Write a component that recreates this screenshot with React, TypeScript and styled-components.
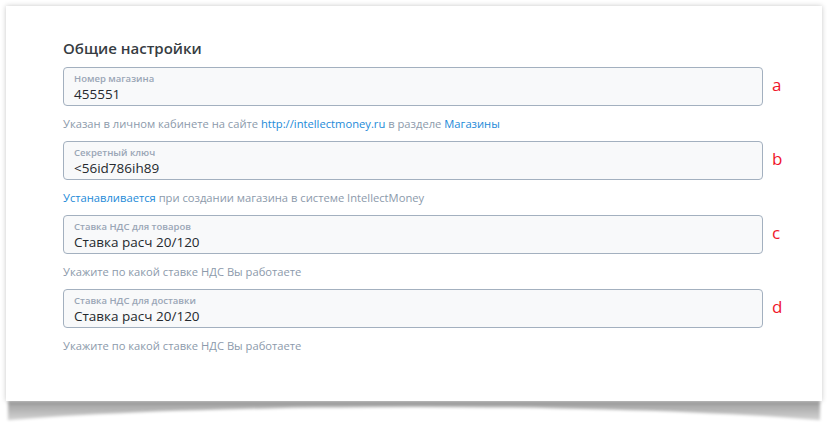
import styled, { createGlobalStyle } from 'styled-components';

const GlobalStyle = createGlobalStyle`
  html, body {
    margin: 0;
    padding: 0;
    background: #ffffff;
    overflow: hidden;
  }
  body {
    font-family: 'Open Sans', 'Noto Sans', sans-serif;
  }
`;

const Page = styled.div`
  width: 836px;
  height: 430px;
  padding: 6px 14px 0 6px;
  box-sizing: border-box;
  overflow: hidden;
`;

const Frame = styled.div`
  position: relative;
  width: 816px;

  &::before {
    content: '';
    position: absolute;
    left: 2px;
    right: 2px;
    top: 100%;
    height: 22px;
    background: linear-gradient(to bottom, #9c9c9c, #c8c8c8 70%, #e0e0e0);
    filter: blur(1.5px);
  }

  &::after {
    content: '';
    position: absolute;
    left: -90px;
    right: -90px;
    top: calc(100% + 6px);
    height: 64px;
    border-radius: 50%;
    background: #ffffff;
    filter: blur(1.5px);
  }
`;

const Card = styled.div`
  position: relative;
  z-index: 1;
  height: 395px;
  box-sizing: border-box;
  padding: 32px 0 0 57px;
  background: #ffffff;
  box-shadow: 0 0 5px rgba(0, 0, 0, 0.22);
`;

const Title = styled.h2`
  margin: 0 0 9px;
  font-size: 15px;
  line-height: 20px;
  font-weight: 600;
  color: #363c42;
`;

const Group = styled.div`
  display: flex;
  flex-direction: column;
`;

const Row = styled.div`
  display: flex;
  align-items: center;
`;

const Field = styled.div`
  width: 700px;
  height: 39px;
  box-sizing: border-box;
  padding: 5px 10px 0;
  border: 1px solid #a3b0bf;
  border-radius: 4px;
  background: #f8f9fa;
`;

const FieldLabel = styled.div`
  font-size: 9.5px;
  line-height: 12px;
  font-weight: 600;
  color: #9aa6b6;
`;

const FieldValue = styled.div`
  font-size: 13.5px;
  line-height: 18px;
  color: #25292e;
`;

const Mark = styled.span`
  margin-left: 9px;
  margin-top: -4px;
  font-family: 'Open Sans', sans-serif;
  font-size: 17px;
  color: #f0142a;
`;

const Hint = styled.div`
  padding: 10px 0 9px;
  font-size: 11.2px;
  line-height: 16px;
  color: #8c9aab;
`;

const Link = styled.span`
  color: #1c8ad8;
`;

interface Setting {
  label: string;
  value: string;
  mark: string;
  hint: React.ReactNode;
}

const settings: Setting[] = [
  {
    label: 'Номер магазина',
    value: '455551',
    mark: 'a',
    hint: (
      <>
        Указан в личном кабинете на сайте <Link>http://intellectmoney.ru</Link> в разделе{' '}
        <Link>Магазины</Link>
      </>
    ),
  },
  {
    label: 'Секретный ключ',
    value: '<56id786ih89',
    mark: 'b',
    hint: (
      <>
        <Link>Устанавливается</Link> при создании магазина в системе IntellectMoney
      </>
    ),
  },
  {
    label: 'Ставка НДС для товаров',
    value: 'Ставка расч 20/120',
    mark: 'c',
    hint: 'Укажите по какой ставке НДС Вы работаете',
  },
  {
    label: 'Ставка НДС для доставки',
    value: 'Ставка расч 20/120',
    mark: 'd',
    hint: 'Укажите по какой ставке НДС Вы работаете',
  },
];

export default function App() {
  return (
    <>
      <GlobalStyle />
      <Page>
        <Frame>
          <Card>
            <Title>Общие настройки</Title>
            {settings.map((item) => (
              <Group key={item.mark}>
                <Row>
                  <Field>
                    <FieldLabel>{item.label}</FieldLabel>
                    <FieldValue>{item.value}</FieldValue>
                  </Field>
                  <Mark>{item.mark}</Mark>
                </Row>
                <Hint>{item.hint}</Hint>
              </Group>
            ))}
          </Card>
        </Frame>
      </Page>
    </>
  );
}
